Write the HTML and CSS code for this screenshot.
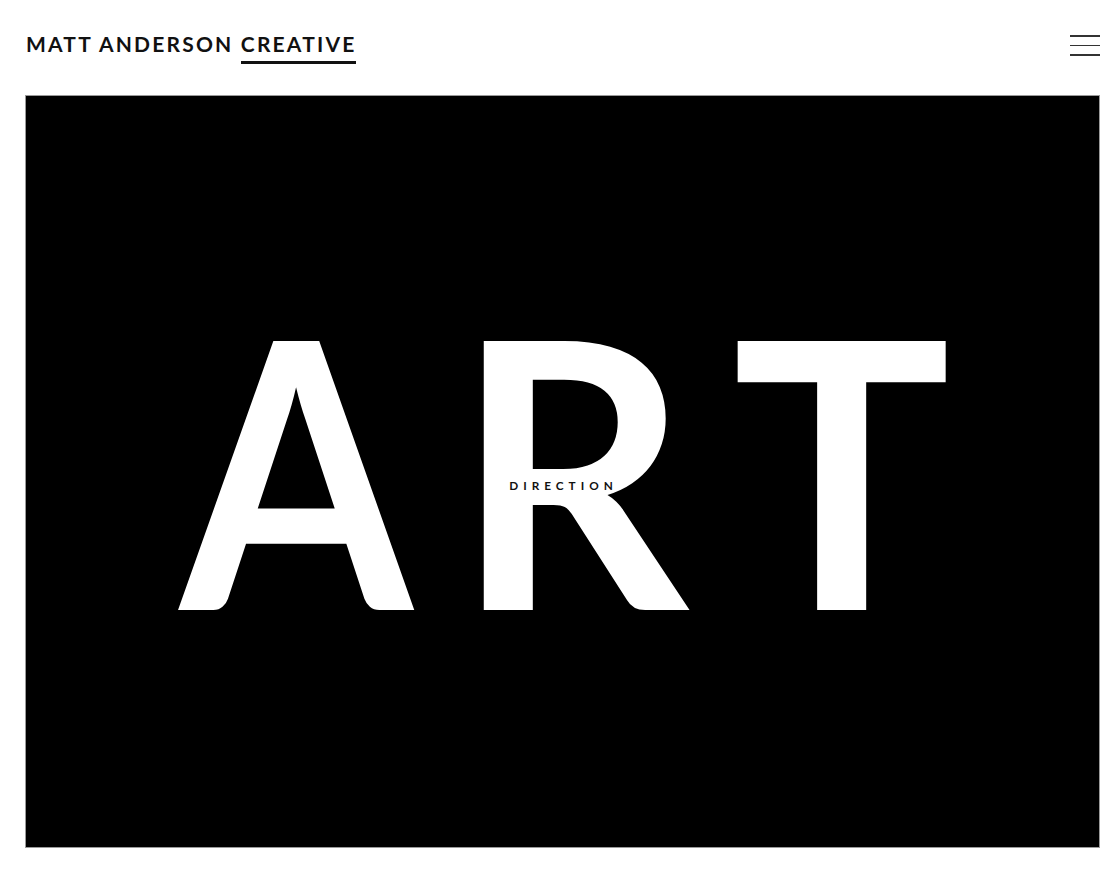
FILE: index.html
```html
<!DOCTYPE html>
<html>
<head>
<meta charset="utf-8">
<link rel="stylesheet" href="styles.css">
</head>
<body>
<header class="top">
  <div class="brand">MATT ANDERSON <span class="brand-u">CREATIVE</span></div>
  <button class="menu" aria-label="Menu"><span></span><span></span><span></span></button>
</header>
<main class="hero">
  <div class="word">
    <span class="l l-a">A</span><span class="l l-r">R<span class="sub">DIRECTION</span></span><span class="l l-t">T</span>
  </div>
</main>
</body>
</html>
```
FILE: styles.css
```css
html, body { margin: 0; padding: 0; background: #fff; }
body { font-family: "Lato", "Liberation Sans", sans-serif; color: #111; }
.top {
  display: flex; justify-content: space-between; align-items: flex-start;
  padding: 30px 20px 0 26px; height: 65px; box-sizing: border-box;
}
.brand {
  font-size: 21px; font-weight: 700; letter-spacing: 2.2px; line-height: 28px;
  color: #111; white-space: nowrap;
}
.brand-u { display: inline-block; border-bottom: 3px solid #111; line-height: 28px; padding-bottom: 3px; height: 28px; }
.menu {
  display: flex; flex-direction: column; gap: 8px; width: 30px; padding: 5px 0 0 0;
  border: 0; background: none;
}
.menu span { display: block; height: 1.5px; background: #333; }
.hero {
  margin: 30px 0 0 25px; width: 1075px; height: 753px; background: #000;
  box-sizing: border-box; border: 1px solid #9a9a9a;
  display: flex; align-items: center; justify-content: center;
}
.word {
  display: flex; align-items: flex-end; margin-bottom: 12px; margin-right: 5px;
  font-family: "Lato", sans-serif; font-weight: 700; color: #fff;
  font-size: 372px; line-height: 1;
}
.l { display: block; position: relative; }
.l-a { transform: scaleX(0.9); margin-right: 27px; }
.l-r { transform: scaleX(0.98); margin-right: 38px; }
.l-t { transform: scaleX(0.98); }
.sub {
  position: absolute; left: 56px; top: 200px;
  font-size: 12px; font-weight: 700; letter-spacing: 5.1px; color: #111; line-height: 12px;
  white-space: nowrap;
}
```
